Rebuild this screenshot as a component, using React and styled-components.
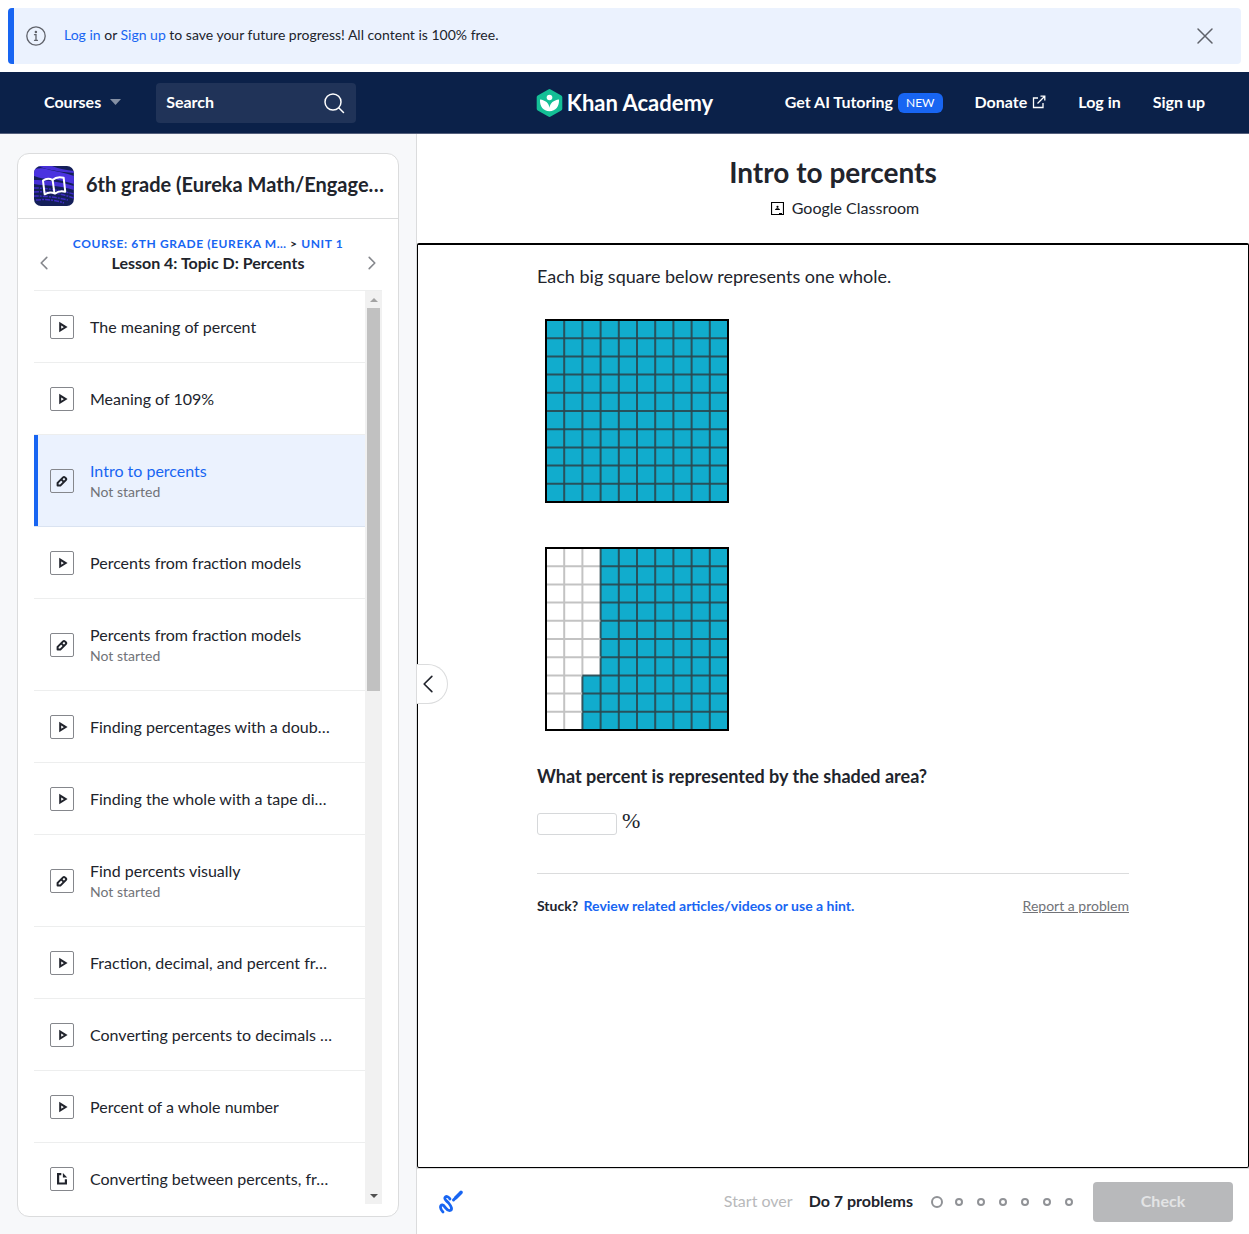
import React, { useState } from "react";
import styled, { createGlobalStyle, css } from "styled-components";

const color = {
  blue: "#1865f2",
  navy: "#0b2149",
  ink: "#21242c",
  muted: "#717378",
  line: "#dbdcdd",
  pale: "#ebf2fe",
  wash: "#f7f8fa",
};

const GlobalStyle = createGlobalStyle`
  *, *::before, *::after { box-sizing: border-box; }
  body { margin: 0; background: #fff; color: ${color.ink}; font-family: Lato, "Noto Sans", sans-serif; font-size: 16px; }
  button, input { font: inherit; color: inherit; }
  a { color: ${color.blue}; text-decoration: none; }
  h1, h2, h3, p, ul, ol { margin: 0; padding: 0; font-weight: inherit; list-style: none; }
`;

const Shell = styled.div`
  display: flex;
  flex-direction: column;
  height: 100vh;
  min-height: 640px;
`;

const BannerWrap = styled.div`
  padding: 8px;
`;

const Banner = styled.div`
  display: flex;
  align-items: center;
  height: 56px;
  padding: 0 24px 0 12px;
  border-left: 6px solid ${color.blue};
  border-radius: 4px;
  background: ${color.pale};
  font-size: 14px;
  line-height: 20px;

  p { flex: 1; margin: 0 18px; padding-bottom: 2px; }
`;

const PlainButton = styled.button`
  display: inline-flex;
  align-items: center;
  justify-content: center;
  padding: 0;
  border: 0;
  background: none;
  color: ${(p) => p.$tone || "inherit"};
  font-weight: ${(p) => (p.$bold ? 700 : 400)};
  gap: ${(p) => p.$gap || 0}px;
  cursor: pointer;
`;

const TextButton = styled(PlainButton)`
  padding-bottom: 2px;
`;

const NavBar = styled.header`
  display: grid;
  grid-template-columns: 1fr auto 1fr;
  align-items: center;
  height: 62px;
  padding: 0 44px;
  border-bottom: 1px solid #545f7c;
  background: ${color.navy};
  color: #fff;
  font-weight: 700;
  line-height: 20px;

  a { color: #fff; }
`;

const NavGroup = styled.nav`
  display: flex;
  align-items: center;
  gap: ${(p) => p.$gap}px;
  justify-content: ${(p) => (p.$end ? "flex-end" : "flex-start")};
`;

const Search = styled.label`
  display: flex;
  align-items: center;
  width: 200px;
  height: 40px;
  padding: 0 10px;
  border-radius: 4px;
  background: #203358;

  input {
    flex: 1;
    min-width: 0;
    padding: 0 0 2px;
    border: 0;
    outline: 0;
    background: none;
    font-weight: 700;
  }
  input::placeholder { color: #fff; opacity: 1; }
`;

const Logo = styled.a`
  display: flex;
  align-items: center;
  gap: 4px;
  font-size: 22px;
  line-height: 28px;
`;

const NavLink = styled.a`
  display: flex;
  align-items: center;
  gap: 5px;
  padding-bottom: 2px;
`;

const NewTag = styled.span`
  margin-top: 2px;
  padding: 0 8px;
  border-radius: 6px;
  background: ${color.blue};
  font-size: 12px;
  font-weight: 400;
  line-height: 20px;
`;

const Columns = styled.div`
  flex: 1;
  display: grid;
  grid-template-columns: 417px minmax(0, 1fr);
  min-height: 0;
`;

const Sidebar = styled.aside`
  display: flex;
  min-height: 0;
  padding: 19px 17px 17px;
  border-right: 1px solid ${color.line};
  background: ${color.wash};
`;

const Card = styled.section`
  flex: 1;
  display: flex;
  flex-direction: column;
  min-width: 0;
  padding-bottom: 12px;
  border: 1px solid ${color.line};
  border-radius: 12px;
  background: #fff;
`;

const CourseHead = styled.div`
  display: flex;
  align-items: center;
  gap: 12px;
  height: 65px;
  padding: 0 14px 0 16px;
  border-bottom: 1px solid ${color.line};

  h2 { padding-bottom: 4px; font-size: 20px; font-weight: 700; line-height: 24px; white-space: nowrap; }
`;

const LessonHead = styled.div`
  display: flex;
  align-items: flex-end;
  justify-content: space-between;
  height: 72px;
  margin: 0 16px;
  padding: 0 2px 17px;
  border-bottom: 1px solid #edeeee;
  text-align: center;

  h3 { font-size: 16px; font-weight: 700; line-height: 20px; }
  button { height: 20px; }
`;

const Crumbs = styled.p`
  font-size: 12px;
  font-weight: 700;
  letter-spacing: 0.6px;
  line-height: 18px;
`;

const ListFrame = styled.div`
  flex: 1;
  display: grid;
  grid-template-columns: minmax(0, 1fr) 17px;
  min-height: 0;
  margin: 0 16px;
`;

const LessonList = styled.ul`
  overflow: hidden;
`;

const LessonItem = styled.li`
  border-bottom: 1px solid #edeeee;

  a {
    display: flex;
    align-items: center;
    gap: 16px;
    padding: 24px 16px 23px 12px;
    border-left: 4px solid transparent;
    color: ${color.ink};
  }

  ${(p) => p.$active && css`
    background: ${color.pale};
    border-bottom-color: #dae3f1;
    a { border-left-color: ${color.blue}; color: ${color.blue}; }
  `}
`;

const LessonText = styled.span`
  display: grid;
  padding: 1px 0;
  line-height: 22px;
  white-space: nowrap;

  small { color: ${color.muted}; font-size: 14px; line-height: 20px; }
`;

const KindBox = styled.span`
  display: grid;
  place-items: center;
  width: 24px;
  height: 24px;
  border: 1px solid #85878c;
  border-radius: 2px;
  color: ${color.ink};
`;

const ScrollTrack = styled.div`
  display: flex;
  flex-direction: column;
  align-items: center;
  justify-content: space-between;
  background: #f1f1f1;
`;

const ScrollArrow = styled.span`
  display: grid;
  place-items: center;
  height: 17px;
`;

const ScrollThumb = styled.div`
  width: 13px;
  height: 42%;
  margin-bottom: auto;
  background: #c1c1c1;
`;

const Main = styled.main`
  display: flex;
  flex-direction: column;
  min-height: 0;
`;

const TitleBlock = styled.div`
  display: flex;
  flex-direction: column;
  align-items: center;
  height: 109px;
  padding-top: 22px;

  h1 { font-size: 28px; font-weight: 700; line-height: 32px; }
`;

const Classroom = styled.a`
  display: flex;
  align-items: center;
  gap: 8px;
  margin-top: 10px;
  padding-left: 24px;
  color: ${color.ink};
  line-height: 20px;
`;

const Exercise = styled.section`
  flex: 1;
  position: relative;
  min-height: 0;
  border: 1px solid #000;
  border-top-width: 2px;
  border-radius: 2px;
`;

const Collapse = styled.button`
  position: absolute;
  top: 419px;
  left: -1px;
  display: grid;
  place-items: center start;
  width: 31px;
  height: 40px;
  padding: 0;
  border: 1px solid ${color.line};
  border-left: 0;
  border-radius: 0 20px 20px 0;
  background: #fff;
`;

const Problem = styled.div`
  max-width: 592px;
  margin: 0 auto;
  padding-top: 19px;
  font-size: 18px;
  line-height: 24px;
`;

const Figure = styled.svg`
  display: block;
  width: 184px;
  height: 184px;
  margin: ${(p) => p.$top}px 0 0 8px;
`;

const Question = styled.p`
  margin-top: 33px;
  font-weight: 700;
`;

const Answer = styled.label`
  display: flex;
  align-items: flex-start;
  gap: 5px;
  height: 24px;
  margin-top: 23px;
  font-family: "Liberation Serif", serif;
  font-size: 22px;
  line-height: 20px;

  input {
    width: 80px;
    height: 22px;
    margin-top: 2px;
    padding: 0 4px;
    border: 1px solid #d6d8da;
    border-radius: 3px;
    background: #fff;
    font-size: 16px;
  }
`;

const HelpRow = styled.div`
  display: flex;
  justify-content: space-between;
  margin-top: 38px;
  padding-top: 22px;
  border-top: 1px solid ${color.line};
  font-size: 14px;
  line-height: 20px;

  strong a { margin-left: 2px; }
`;

const ReportLink = styled.a`
  color: ${color.muted};
  text-decoration: underline;
`;

const Footer = styled.footer`
  display: flex;
  align-items: center;
  height: 66px;
  padding: 1px 16px 0 20px;
  border-top: 1px solid ${color.line};
`;

const Progress = styled.div`
  display: flex;
  align-items: center;
  gap: 16px;
  margin-left: auto;
  line-height: 20px;
`;

const Dots = styled.ol`
  display: flex;
  align-items: center;
  gap: 10px;
  margin: 0 18px 0 2px;
`;

const Dot = styled.li`
  display: grid;
  place-items: center;
  width: 12px;
  height: 12px;

  &::before {
    content: "";
    width: ${(p) => (p.$current ? 12 : 8)}px;
    height: ${(p) => (p.$current ? 12 : 8)}px;
    border: 2px solid #909296;
    border-radius: 50%;
  }
`;

const CheckButton = styled.button`
  width: 140px;
  height: 40px;
  padding: 0 0 3px;
  border: 0;
  border-radius: 4px;
  background: #b8b9bb;
  color: #e3e4e5;
  font-weight: 700;
`;

const ICONS = {
  video: <path d="M4.200 2.600v6.900l5.500-3.450z" fill="none" stroke="currentColor" strokeWidth="2" />,
  exercise: (
    <g fill="none" stroke="currentColor" strokeWidth="2" strokeLinejoin="round">
      <path d="M1.600 10.600V7.900l5.500-5.500a1.300 1.300 0 0 1 1.800 0l.9.9a1.300 1.300 0 0 1 0 1.800l-5.500 5.500z" />
      <path d="M5.300 4.400l2.500 2.500" />
    </g>
  ),
  article: (
    <g>
      <path d="M5.300 0H1v11.600h10V6.200H8.800v3.200H3.200V2.200h2.100z" fill="currentColor" />
      <path d="M6.900 0v4.400h4.300z" fill="currentColor" />
    </g>
  ),
};

function KindIcon({ kind }) {
  return (
    <KindBox>
      <svg width="12" height="12" viewBox="0 0 12 12" aria-hidden="true">{ICONS[kind]}</svg>
    </KindBox>
  );
}

function Chevron({ size, flip, stroke, width }) {
  return (
    <svg width={size} height={size} viewBox="0 0 20 20" fill="none" stroke={stroke} strokeWidth={width} aria-hidden="true">
      <path d={flip ? "M6.500 3l7 7-7 7" : "M13.500 3l-7 7 7 7"} strokeLinecap="round" strokeLinejoin="round" />
    </svg>
  );
}

const STEP = 18.2;
const lines = [1, 2, 3, 4, 5, 6, 7, 8, 9];

function HundredGrid({ blanks, top, label }) {
  return (
    <Figure $top={top} viewBox="0 0 184 184" role="img" aria-label={label}>
      <rect x="1" y="1" width="182" height="182" fill="#fff" />
      {blanks.map((blank, col) => (
        <rect key={col} x={1 + col * STEP} y={1 + blank * STEP} width={STEP + 0.2} height={(10 - blank) * STEP} fill="#11accd" />
      ))}
      {lines.map((n) => {
        const at = 1 + n * STEP;
        const left = Math.min(blanks[n], blanks[n - 1]);
        const firstFilled = blanks.findIndex((b) => b < n + 0.5);
        const edge = firstFilled < 0 ? 183 : 1 + firstFilled * STEP;
        const start = 1 + left * STEP;
        return (
          <g key={n} strokeWidth="2">
            {left > 0 && <path d={`M${at} 1V${start}`} stroke="#c3c3c3" />}
            {edge > 1 && <path d={`M1 ${at}H${edge}`} stroke="#c3c3c3" />}
            <path d={`M${at} ${start}V183`} stroke="#2a4850" opacity="0.9" />
            <path d={`M${edge} ${at}H183`} stroke="#2a4850" opacity="0.9" />
          </g>
        );
      })}
      <rect x="1" y="1" width="182" height="182" fill="none" stroke="#000" strokeWidth="2" />
    </Figure>
  );
}

function CourseArt() {
  return (
    <svg width="40" height="40" viewBox="0 0 40 40" aria-hidden="true">
      <defs><clipPath id="tile"><rect width="40" height="40" rx="7" /></clipPath></defs>
      <g clipPath="url(#tile)">
        <path d="M0 0h40v40H0z" fill="#141f59" />
        <path d="M0 3c6-1 10-1 16 1 8 2 16 3 24 6v8c-8-2-16-5-24-5C10 13 5 12 0 10z" fill="#4a33e0" />
        <path d="M4 0h14c8 3 14 4 22 5v2C26 6 14 4 4 0zM0 14c9 0 24 1 40 6v4C26 19 12 20 0 18z" fill="#4630d6" />
        <path d="M0 22c12 0 24 2 40 6M0 26c12-1 24 1 40 6M0 30c10 0 22 1 34 4M2 34c10-1 20 0 28 3" fill="none" stroke="#3d2bc2" strokeWidth="1.500" strokeDasharray="5 1 2 1" />
        <g fill="none" stroke="#fff" strokeWidth="2" strokeLinejoin="round">
          <path d="M9 14.500c3-2 6.300-2.200 9.500-.6 3-2.700 7.500-3.200 11.200-2.200l1.600 14c-3.700-1-7.300-.5-10.400 1.900-3.300-1.500-6.900-1.200-10.200.7z" />
          <path d="M18.600 13.500l1.900 14" />
        </g>
      </g>
    </svg>
  );
}

const lessons = [
  { kind: "video", title: "The meaning of percent" },
  { kind: "video", title: "Meaning of 109%" },
  { kind: "exercise", title: "Intro to percents", status: "Not started", active: true },
  { kind: "video", title: "Percents from fraction models" },
  { kind: "exercise", title: "Percents from fraction models", status: "Not started" },
  { kind: "video", title: "Finding percentages with a doub…" },
  { kind: "video", title: "Finding the whole with a tape di…" },
  { kind: "exercise", title: "Find percents visually", status: "Not started" },
  { kind: "video", title: "Fraction, decimal, and percent fr…" },
  { kind: "video", title: "Converting percents to decimals …" },
  { kind: "video", title: "Percent of a whole number" },
  { kind: "article", title: "Converting between percents, fr…" },
];

export default function App() {
  const [answer, setAnswer] = useState("");
  return (
    <Shell>
      <GlobalStyle />
      <BannerWrap>
        <Banner>
          <svg width="20" height="20" viewBox="0 0 20 20" fill="none" stroke="#5f626a" strokeWidth="1.300" aria-hidden="true">
            <circle cx="10" cy="10" r="9.200" />
            <path d="M8.500 8.700H10v5.500M8.500 14.300h3" strokeLinecap="round" />
            <circle cx="9.900" cy="5.900" r=".6" fill="#5f626a" />
          </svg>
          <p><a href="#login">Log in</a> or <a href="#signup">Sign up</a> to save your future progress! All content is 100% free.</p>
          <PlainButton aria-label="Dismiss">
            <svg width="24" height="24" viewBox="0 0 24 24" stroke="#5f626a" strokeWidth="1.500" strokeLinecap="round" aria-hidden="true">
              <path d="M5 5l14 14M19 5L5 19" />
            </svg>
          </PlainButton>
        </Banner>
      </BannerWrap>

      <NavBar>
        <NavGroup $gap={35}>
          <TextButton $bold $gap={9}>
            Courses
            <svg width="11" height="6" viewBox="0 0 11 6" aria-hidden="true"><path d="M0 0h11L5.500 6z" fill="#8590a4" /></svg>
          </TextButton>
          <Search>
            <input type="text" placeholder="Search" aria-label="Search" />
            <svg width="24" height="24" viewBox="0 0 24 24" fill="none" stroke="#fff" strokeWidth="1.500" strokeLinecap="round" aria-hidden="true">
              <circle cx="11" cy="11" r="8" />
              <path d="M17 17l4.500 4.500" />
            </svg>
          </Search>
        </NavGroup>
        <Logo href="#home">
          <svg width="27" height="28" viewBox="0 0 27 28" aria-hidden="true">
            <path d="M12.300.4a2.400 2.400 0 0 1 2.400 0l10.600 6.100a2 2 0 0 1 1 1.800v11.400a2 2 0 0 1-1 1.800l-10.600 6.100a2.400 2.400 0 0 1-2.400 0L1.700 21.500a2 2 0 0 1-1-1.800V8.300a2 2 0 0 1 1-1.800z" fill="#14bf96" />
            <circle cx="13.500" cy="8.500" r="2.800" fill="#fff" />
            <path d="M4 10.500c5.500.6 8.800 3.600 9.500 8.300.7-4.700 4-7.700 9.500-8.300.4 6.800-3.300 11.700-9.500 11.700S3.600 17.300 4 10.500z" fill="#fff" />
          </svg>
          Khan Academy
        </Logo>
        <NavGroup $gap={32} $end>
          <NavLink href="#ai">Get AI Tutoring <NewTag>NEW</NewTag></NavLink>
          <NavLink href="#donate">
            Donate
            <svg width="14" height="14" viewBox="0 0 14 14" fill="none" stroke="#fff" strokeWidth="1.300" aria-hidden="true">
              <path d="M6 3H1.500v9.500H11V8M5.500 8.500L12.500 1.500M8.500 1.200h4.300v4.300" />
            </svg>
          </NavLink>
          <NavLink href="#login">Log in</NavLink>
          <NavLink href="#signup">Sign up</NavLink>
        </NavGroup>
      </NavBar>

      <Columns>
        <Sidebar>
          <Card>
            <CourseHead>
              <CourseArt />
              <h2>6th grade (Eureka Math/Engage…</h2>
            </CourseHead>
            <LessonHead>
              <PlainButton aria-label="Previous lesson"><Chevron size={16} stroke="#85878c" width={2} /></PlainButton>
              <div>
                <Crumbs><a href="#course">COURSE: 6TH GRADE (EUREKA M…</a> &gt; <a href="#unit">UNIT 1</a></Crumbs>
                <h3>Lesson 4: Topic D: Percents</h3>
              </div>
              <PlainButton aria-label="Next lesson"><Chevron flip size={16} stroke="#85878c" width={2} /></PlainButton>
            </LessonHead>
            <ListFrame>
              <LessonList>
                {lessons.map((l, i) => (
                  <LessonItem key={i} $active={l.active}>
                    <a href={`#lesson-${i}`}>
                      <KindIcon kind={l.kind} />
                      <LessonText>{l.title}{l.status && <small>{l.status}</small>}</LessonText>
                    </a>
                  </LessonItem>
                ))}
              </LessonList>
              <ScrollTrack aria-hidden="true">
                <ScrollArrow><svg width="8" height="4" viewBox="0 0 8 4"><path d="M0 4h8L4 0z" fill="#a3a3a3" /></svg></ScrollArrow>
                <ScrollThumb />
                <ScrollArrow><svg width="8" height="4" viewBox="0 0 8 4"><path d="M0 0h8L4 4z" fill="#505050" /></svg></ScrollArrow>
              </ScrollTrack>
            </ListFrame>
          </Card>
        </Sidebar>

        <Main>
          <TitleBlock>
            <h1>Intro to percents</h1>
            <Classroom href="#classroom">
              <svg width="13" height="13" viewBox="0 0 13 13" aria-hidden="true">
                <path d="M.5.500h12v12H.5z" fill="none" stroke="#000" strokeWidth="1.200" />
                <circle cx="6.500" cy="4.800" r="1.100" />
                <path d="M4 8c0-1.300 1.200-1.800 2.500-1.800S9 6.700 9 8zM8 11h3v1H8z" />
              </svg>
              Google Classroom
            </Classroom>
          </TitleBlock>
          <Exercise>
            <Collapse aria-label="Collapse sidebar"><Chevron size={22} stroke="#21242c" width={1.5} /></Collapse>
            <Problem>
              <p>Each big square below represents one whole.</p>
              <HundredGrid top={31} blanks={[0, 0, 0, 0, 0, 0, 0, 0, 0, 0]} label="A square with 100 of 100 cells shaded" />
              <HundredGrid top={44} blanks={[10, 10, 7, 0, 0, 0, 0, 0, 0, 0]} label="A square with 73 of 100 cells shaded" />
              <Question>What percent is represented by the shaded area?</Question>
              <Answer>
                <input type="text" aria-label="Your answer" value={answer} onChange={(e) => setAnswer(e.target.value)} />
                %
              </Answer>
              <HelpRow>
                <strong>Stuck? <a href="#hint">Review related articles/videos or use a hint.</a></strong>
                <ReportLink href="#report">Report a problem</ReportLink>
              </HelpRow>
            </Problem>
          </Exercise>
          <Footer>
            <PlainButton aria-label="Scratchpad">
              <svg width="28" height="28" viewBox="0 0 28 28" fill="none" stroke={color.blue} strokeLinecap="round" strokeLinejoin="round" aria-hidden="true">
                <path d="M6 24C3 21 2.500 16.800 5.500 17 8 17.200 9.500 23.500 13 22.500 16 21.500 14 18 12 15.500 10 13 6.800 11.500 8 9.500 9.200 7.500 12 9 13 11" strokeWidth="2.800" />
                <path d="M19 9.500l5-5" strokeWidth="3.600" />
                <path d="M16.500 12l1.500-1.500" strokeWidth="3" />
              </svg>
            </PlainButton>
            <Progress>
              <TextButton $tone="#b8b9bb">Start over</TextButton>
              <TextButton as="strong" $bold>Do 7 problems</TextButton>
              <Dots aria-label="Progress">
                {[0, 1, 2, 3, 4, 5, 6].map((n) => <Dot key={n} $current={n === 0} />)}
              </Dots>
            </Progress>
            <CheckButton disabled>Check</CheckButton>
          </Footer>
        </Main>
      </Columns>
    </Shell>
  );
}
